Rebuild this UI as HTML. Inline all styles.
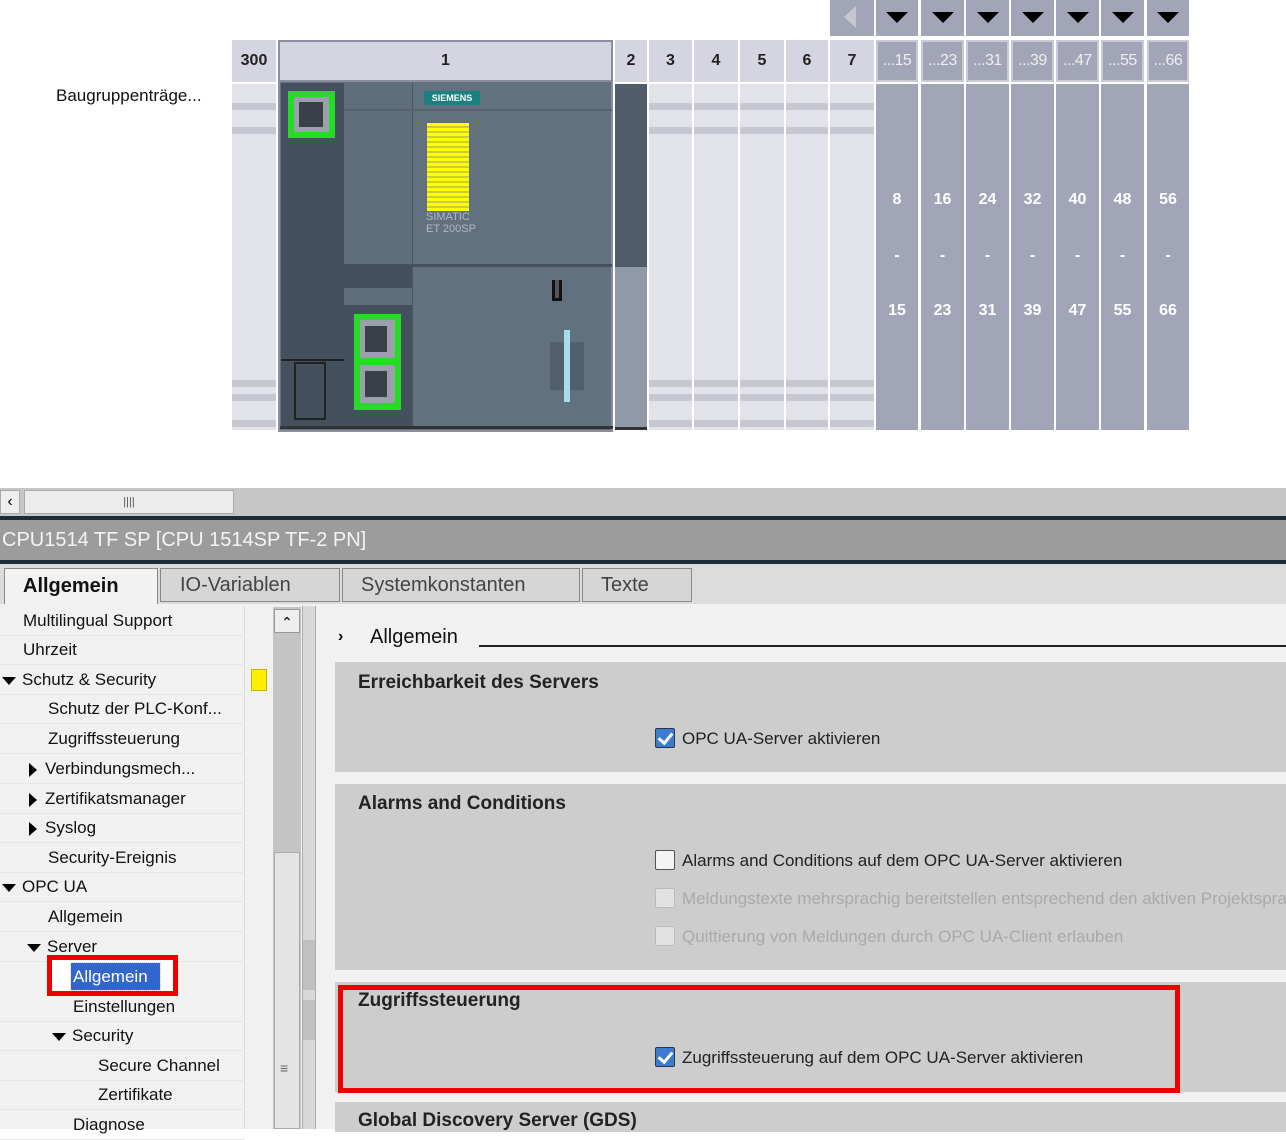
<!DOCTYPE html>
<html><head><meta charset="utf-8"><style>
*{margin:0;padding:0;box-sizing:border-box}
body{width:1286px;height:1129px;overflow:hidden;background:#fff;font-family:"Liberation Sans","DejaVu Sans",sans-serif;position:relative}
.a{position:absolute}
.hd{position:absolute;top:40px;height:42px;background:#d4d5e0;font-weight:bold;font-size:16px;color:#222;display:flex;align-items:center;justify-content:center}
.lc{position:absolute;top:84px;height:346px;background:#e2e2ea}
.st{position:absolute;left:0;right:0;height:7px;background:#c6c7d0}
.gc{position:absolute;top:84px;height:346px;background:#a2a5b8;color:#fff;font-weight:bold;font-size:16px}
.gc span{position:absolute;left:0;right:0;text-align:center}
.gh{position:absolute;top:40px;height:42px;background:#a2a5b8;border:2px solid #c9cad6;color:#eee;font-size:16px;display:flex;align-items:center;justify-content:center;letter-spacing:-0.5px}
.ar{position:absolute;top:0;height:36px;background:#a2a5b8}
.ar:after{content:"";position:absolute;left:50%;top:12px;margin-left:-11px;border-left:11px solid transparent;border-right:11px solid transparent;border-top:11px solid #000}
.tr{position:absolute;left:0;width:245px;height:29px;font-size:17px;color:#111;border-bottom:1px solid #e6e6e6;line-height:28px}
.tri{display:inline-block;width:0;height:0;border-left:7px solid transparent;border-right:7px solid transparent;border-top:8px solid #000;margin-right:6px;vertical-align:middle}
.trr{display:inline-block;width:0;height:0;border-top:7px solid transparent;border-bottom:7px solid transparent;border-left:8px solid #000;margin-right:8px;vertical-align:middle}
.sec{position:absolute;left:335px;right:0;background:#cdcdcd}
.sh{position:absolute;left:23px;font-size:19px;font-weight:bold;color:#222}
.cb{position:absolute;font-size:17px;color:#222}
.cb i{display:inline-block;width:20px;height:20px;border:1px solid #555;background:#f4f4f4;vertical-align:-4px;margin-right:7px;border-radius:2px}
.cb i.c{background:#3b7bd0;border-color:#334;position:relative}
.cb i.c:after{content:"";position:absolute;left:5px;top:1px;width:6px;height:11px;border:solid #fff;border-width:0 3px 3px 0;transform:rotate(40deg)}
.cb.d{color:#a9a9a9}.cb.d i{border-color:#bbb;background:#e2e2e2}
</style></head><body>
<div class="a" style="left:56px;top:86px;font-size:17px;color:#111">Baugruppenträge...</div>
<!-- header -->
<div class="hd" style="left:232px;width:44px">300</div>
<div class="hd" style="left:278px;width:335px;border:2px solid #8a8e9e">1</div>
<div class="hd" style="left:615px;width:32px">2</div>
<div class="hd" style="left:649px;width:43px">3</div>
<div class="hd" style="left:694px;width:44px">4</div>
<div class="hd" style="left:740px;width:44px">5</div>
<div class="hd" style="left:786px;width:42px">6</div>
<div class="hd" style="left:830px;width:44px">7</div>
<div class="a" style="left:830px;top:0;width:44px;height:36px;background:#a2a5b8"></div>
<div class="a" style="left:844px;top:6px;border-top:11px solid transparent;border-bottom:11px solid transparent;border-right:12px solid #c4c6d2"></div>
<div class="ar" style="left:876px;width:42px"></div><div class="ar" style="left:921px;width:43px"></div><div class="ar" style="left:966px;width:43px"></div><div class="ar" style="left:1011px;width:43px"></div><div class="ar" style="left:1056px;width:43px"></div><div class="ar" style="left:1101px;width:43px"></div><div class="ar" style="left:1147px;width:42px"></div>
<div class="gh" style="left:876px;width:42px">...15</div><div class="gh" style="left:921px;width:43px">...23</div><div class="gh" style="left:966px;width:43px">...31</div><div class="gh" style="left:1011px;width:43px">...39</div><div class="gh" style="left:1056px;width:43px">...47</div><div class="gh" style="left:1101px;width:43px">...55</div><div class="gh" style="left:1147px;width:42px">...66</div>
<!-- light columns -->
<div class="lc" style="left:232px;width:44px"><div class="st" style="top:19px"></div><div class="st" style="top:43px"></div><div class="st" style="top:296px"></div><div class="st" style="top:310px"></div><div class="st" style="top:336px"></div></div>
<div class="lc" style="left:649px;width:43px"><div class="st" style="top:19px"></div><div class="st" style="top:43px"></div><div class="st" style="top:296px"></div><div class="st" style="top:310px"></div><div class="st" style="top:336px"></div></div>
<div class="lc" style="left:694px;width:44px"><div class="st" style="top:19px"></div><div class="st" style="top:43px"></div><div class="st" style="top:296px"></div><div class="st" style="top:310px"></div><div class="st" style="top:336px"></div></div>
<div class="lc" style="left:740px;width:44px"><div class="st" style="top:19px"></div><div class="st" style="top:43px"></div><div class="st" style="top:296px"></div><div class="st" style="top:310px"></div><div class="st" style="top:336px"></div></div>
<div class="lc" style="left:786px;width:42px"><div class="st" style="top:19px"></div><div class="st" style="top:43px"></div><div class="st" style="top:296px"></div><div class="st" style="top:310px"></div><div class="st" style="top:336px"></div></div>
<div class="lc" style="left:830px;width:44px"><div class="st" style="top:19px"></div><div class="st" style="top:43px"></div><div class="st" style="top:296px"></div><div class="st" style="top:310px"></div><div class="st" style="top:336px"></div></div>
<!-- slot 2 -->
<div class="a" style="left:615px;top:84px;width:32px;height:183px;background:#505c6c"></div>
<div class="a" style="left:615px;top:267px;width:32px;height:161px;background:#9098aa"></div>
<div class="a" style="left:615px;top:427px;width:32px;height:3px;background:#333"></div>
<!-- grey columns -->
<div class="gc" style="left:876px;width:42px"><span style="top:107px">8</span><span style="top:163px">-</span><span style="top:218px">15</span></div>
<div class="gc" style="left:921px;width:43px"><span style="top:107px">16</span><span style="top:163px">-</span><span style="top:218px">23</span></div>
<div class="gc" style="left:966px;width:43px"><span style="top:107px">24</span><span style="top:163px">-</span><span style="top:218px">31</span></div>
<div class="gc" style="left:1011px;width:43px"><span style="top:107px">32</span><span style="top:163px">-</span><span style="top:218px">39</span></div>
<div class="gc" style="left:1056px;width:43px"><span style="top:107px">40</span><span style="top:163px">-</span><span style="top:218px">47</span></div>
<div class="gc" style="left:1101px;width:43px"><span style="top:107px">48</span><span style="top:163px">-</span><span style="top:218px">55</span></div>
<div class="gc" style="left:1147px;width:42px"><span style="top:107px">56</span><span style="top:163px">-</span><span style="top:218px">66</span></div>
<!-- CPU module -->
<div class="a" style="left:278px;top:82px;width:335px;height:350px;border:2px solid #8a8e9e;border-top:none;background:#62717f">
 <div class="a" style="left:1px;top:1px;width:63px;height:344px;background:#45505e"></div>
 <div class="a" style="left:8px;top:9px;width:47px;height:47px;background:#22dd22"></div>
 <div class="a" style="left:14px;top:15px;width:35px;height:35px;background:#9aa0ac"></div>
 <div class="a" style="left:19px;top:20px;width:24px;height:25px;background:#3a3f48"></div>
 <div class="a" style="left:1px;top:277px;width:63px;height:2px;background:#222"></div>
 <div class="a" style="left:14px;top:280px;width:32px;height:58px;border:2px solid #222"></div>
 <div class="a" style="left:64px;top:1px;width:68px;height:344px;background:#5f6e7d"></div>
 <div class="a" style="left:64px;top:182px;width:68px;height:24px;background:#45505e"></div>
 <div class="a" style="left:64px;top:223px;width:68px;height:122px;background:#45505e"></div>
 <div class="a" style="left:74px;top:232px;width:47px;height:96px;background:#22dd22"></div>
 <div class="a" style="left:80px;top:238px;width:35px;height:38px;background:#9aa0ac"></div>
 <div class="a" style="left:80px;top:283px;width:35px;height:38px;background:#9aa0ac"></div>
 <div class="a" style="left:85px;top:244px;width:22px;height:26px;background:#3a3f48"></div>
 <div class="a" style="left:85px;top:289px;width:22px;height:26px;background:#3a3f48"></div>
 <div class="a" style="left:132px;top:1px;width:1px;height:344px;background:#4a5664"></div>
 <div class="a" style="left:64px;top:27px;width:268px;height:2px;background:#56636f"></div>
 <div class="a" style="left:132px;top:182px;width:200px;height:3px;background:#45505e"></div>
 <div class="a" style="left:144px;top:9px;width:56px;height:14px;background:#1a8080;color:#fff;font-size:9px;font-weight:bold;text-align:center;line-height:14px">SIEMENS</div>
 <div class="a" style="left:147px;top:41px;width:42px;height:88px;background:repeating-linear-gradient(#ff0 0 3px,#cc3 3px 5px)"></div>
 <div class="a" style="left:146px;top:129px;font-size:11px;color:#b0b8c2;line-height:12px">SIMATIC<br>ET 200SP</div>
 <div class="a" style="left:272px;top:198px;width:10px;height:21px;border:3px solid #111;border-top:none;background:#555"></div>
 <div class="a" style="left:270px;top:260px;width:34px;height:48px;background:#525f6d"></div>
 <div class="a" style="left:284px;top:248px;width:6px;height:72px;background:#a8dce8"></div>
 <div class="a" style="left:0;top:344px;width:333px;height:3px;background:#333"></div>
</div>
<!-- bottom -->
<div class="a" style="left:0;top:488px;width:1286px;height:28px;background:#c6c6c6"></div>
<div class="a" style="left:0;top:490px;width:20px;height:24px;background:#eee;border:1px solid #aaa;font-size:16px;text-align:center;line-height:22px">&#8249;</div>
<div class="a" style="left:24px;top:490px;width:210px;height:24px;background:#ececec;border:1px solid #aaa;text-align:center;font-size:11px;line-height:22px;color:#555">||||</div>
<div class="a" style="left:0;top:516px;width:1286px;height:4px;background:#1f2a38"></div>
<div class="a" style="left:0;top:520px;width:1286px;height:40px;background:#9c9c9c;color:#f4f4f4;font-size:20px;line-height:40px;padding-left:2px">CPU1514 TF SP [CPU 1514SP TF-2 PN]</div>
<div class="a" style="left:0;top:560px;width:1286px;height:4px;background:#1f2a38"></div>
<div class="a" style="left:0;top:564px;width:1286px;height:40px;background:#dcdcdc"></div>
<div class="a" style="left:4px;top:568px;width:154px;height:38px;background:#f2f2f2;border:1px solid #888;border-bottom:none;font-size:20px;font-weight:bold;line-height:34px;padding-left:18px;color:#111">Allgemein</div>
<div class="a" style="left:160px;top:568px;width:180px;height:34px;background:#d6d6d6;border:1px solid #888;font-size:20px;line-height:32px;padding-left:19px;color:#444">IO-Variablen</div>
<div class="a" style="left:342px;top:568px;width:238px;height:34px;background:#d6d6d6;border:1px solid #888;font-size:20px;line-height:32px;padding-left:18px;color:#444">Systemkonstanten</div>
<div class="a" style="left:582px;top:568px;width:110px;height:34px;background:#d6d6d6;border:1px solid #888;font-size:20px;line-height:32px;padding-left:18px;color:#444">Texte</div>
<div class="a" style="left:0;top:604px;width:1286px;height:525px;background:#f1f1f1"></div>
<!-- tree -->
<div class="a" style="left:244px;top:606px;width:1px;height:523px;background:#d8d8d8"></div>
<div class="tr" style="top:607px;padding-left:23px">Multilingual Support</div>
<div class="tr" style="top:636px;padding-left:23px">Uhrzeit</div>
<div class="tr" style="top:666px;padding-left:2px"><span class="tri"></span>Schutz &amp; Security</div>
<div class="a" style="left:251px;top:669px;width:16px;height:22px;background:#ffee00;border:1px solid #bb0"></div>
<div class="tr" style="top:695px;padding-left:48px">Schutz der PLC-Konf...</div>
<div class="tr" style="top:725px;padding-left:48px">Zugriffssteuerung</div>
<div class="tr" style="top:755px;padding-left:29px"><span class="trr"></span>Verbindungsmech...</div>
<div class="tr" style="top:785px;padding-left:29px"><span class="trr"></span>Zertifikatsmanager</div>
<div class="tr" style="top:814px;padding-left:29px"><span class="trr"></span>Syslog</div>
<div class="tr" style="top:844px;padding-left:48px">Security-Ereignis</div>
<div class="tr" style="top:873px;padding-left:2px"><span class="tri"></span>OPC UA</div>
<div class="tr" style="top:903px;padding-left:48px">Allgemein</div>
<div class="tr" style="top:933px;padding-left:27px"><span class="tri"></span>Server</div>
<div class="a" style="left:47px;top:955px;width:131px;height:41px;border:5px solid #e00;background:#fff"></div>
<div class="a" style="left:71px;top:963px;width:89px;height:27px;background:#3366cc;color:#fff;font-size:17px;line-height:27px;padding-left:2px;outline:1px dotted #ccc">Allgemein</div>
<div class="tr" style="top:993px;padding-left:73px">Einstellungen</div>
<div class="tr" style="top:1022px;padding-left:52px"><span class="tri"></span>Security</div>
<div class="tr" style="top:1052px;padding-left:98px">Secure Channel</div>
<div class="tr" style="top:1081px;padding-left:98px">Zertifikate</div>
<div class="tr" style="top:1111px;padding-left:73px">Diagnose</div>
<!-- scrollbar -->
<div class="a" style="left:273px;top:607px;width:28px;height:522px;background:#c4c4c4"></div>
<div class="a" style="left:274px;top:609px;width:26px;height:24px;background:#eee;border:1px solid #999;text-align:center;font-size:14px;line-height:24px">&#8963;</div>
<div class="a" style="left:274px;top:852px;width:26px;height:277px;background:#e4e4e4;border:1px solid #aaa"></div>
<div class="a" style="left:280px;top:1060px;font-size:14px;color:#666">&#8801;</div>
<div class="a" style="left:302px;top:606px;width:14px;height:523px;background:#d8d8d8;border-left:1px solid #aaa;border-right:1px solid #aaa"></div>
<div class="a" style="left:303px;top:940px;width:12px;height:50px;background:#c0c0c0"></div>
<div class="a" style="left:303px;top:1000px;width:12px;height:40px;background:#c0c0c0"></div>
<!-- right -->
<div class="a" style="left:338px;top:628px;font-size:16px;font-weight:bold">&#8250;</div>
<div class="a" style="left:370px;top:626px;font-size:20px;color:#111">Allgemein</div>
<div class="a" style="left:479px;top:645px;width:807px;height:2px;background:#222"></div>
<div class="sec" style="top:662px;height:110px"><div class="sh" style="top:10px">Erreichbarkeit des Servers</div><div class="cb" style="left:320px;top:66px"><i class="c"></i>OPC UA-Server aktivieren</div></div>
<div class="sec" style="top:784px;height:186px"><div class="sh" style="top:9px">Alarms and Conditions</div>
<div class="cb" style="left:320px;top:66px"><i></i>Alarms and Conditions auf dem OPC UA-Server aktivieren</div>
<div class="cb d" style="left:320px;top:104px;white-space:nowrap"><i></i>Meldungstexte mehrsprachig bereitstellen entsprechend den aktiven Projektsprachen</div>
<div class="cb d" style="left:320px;top:142px"><i></i>Quittierung von Meldungen durch OPC UA-Client erlauben</div></div>
<div class="sec" style="top:982px;height:110px"><div class="sh" style="top:8px">Zugriffssteuerung</div><div class="cb" style="left:320px;top:65px"><i class="c"></i>Zugriffssteuerung auf dem OPC UA-Server aktivieren</div></div>
<div class="a" style="left:338px;top:985px;width:842px;height:108px;border:5px solid #e00"></div>
<div class="sec" style="top:1102px;height:30px"><div class="sh" style="top:8px">Global Discovery Server (GDS)</div></div>
</body></html>
